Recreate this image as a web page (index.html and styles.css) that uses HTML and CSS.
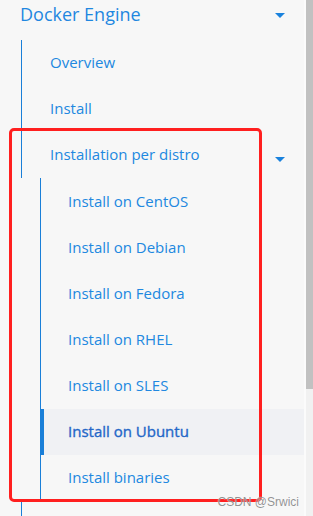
FILE: index.html
```html
<!DOCTYPE html>
<html lang="en">
  <head>
    <meta charset="UTF-8" />
    <title>Docker Engine</title>
    <link rel="stylesheet" href="styles.css">
  </head>
  <body>
    <div class="page">
      <nav class="sidebar">
        <!-- Docker Engine -->
        <div class="group-title">
          <span>Docker Engine</span>
          <i class="caret caret-top"></i>
        </div>
        <ul class="nav">
          <li><a href="#">Overview</a></li>
          <li><a href="#">Install</a></li>
          <li>
            <a href="#" class="has-children">
              <span>Installation per distro</span>
              <i class="caret"></i>
            </a>
            <ul class="nav sub">
              <li><a href="#">Install on CentOS</a></li>
              <li><a href="#">Install on Debian</a></li>
              <li><a href="#">Install on Fedora</a></li>
              <li><a href="#">Install on RHEL</a></li>
              <li><a href="#">Install on SLES</a></li>
              <li><a href="#" class="active">Install on Ubuntu</a></li>
              <li><a href="#">Install binaries</a></li>
            </ul>
          </li>
          <li class="nav-tail"></li>
        </ul>
      </nav>
      <div class="gutter"></div>
      <div class="scrollbar"><div class="thumb"></div></div>
    </div>

    <!-- anotación -->
    <div class="highlight"></div>
    <div class="watermark">CSDN @Srwici</div>
  </body>
</html>
```

FILE: styles.css
```css
body {
  margin: 0;
  width: 313px;
  height: 516px;
  overflow: hidden;
  background-color: #f7f7f7;
  font-family: "Open Sans", "Noto Sans", sans-serif;
  position: relative;
}

.page {
  display: flex;
  height: 516px;
}

.sidebar {
  width: 304px;
  flex-shrink: 0;
}

.gutter {
  width: 2px;
  background-color: #fbfbfb;
}

.scrollbar {
  flex: 1;
  background-color: #f1f1f1;
}

.thumb {
  height: 389px;
  background-color: #c1c1c1;
}

.group-title {
  display: flex;
  justify-content: space-between;
  align-items: flex-start;
  padding: 1px 19px 13px 20px;
  font-size: 18px;
  line-height: 26px;
  color: #1f87e0;
}

.caret {
  width: 0;
  height: 0;
  border-left: 5px solid transparent;
  border-right: 5px solid transparent;
  border-top: 5px solid #1a82dd;
  margin-top: 14px;
}

.caret-top {
  margin-top: 12px;
}

.nav {
  list-style: none;
  margin: 0 0 0 21px;
  padding: 0;
}

.nav a {
  display: flex;
  justify-content: space-between;
  align-items: flex-start;
  padding: 11px 19px 13px 28px;
  border-left: 1px solid #1a7fd8;
  font-size: 15px;
  line-height: 22px;
  color: #2188e0;
  text-decoration: none;
}

.nav-tail {
  height: 20px;
  border-left: 1px solid #1a7fd8;
}

.sub {
  margin-left: 19px;
  padding-top: 1px;
  border-left: 1px solid #1a7fd8;
}

.sub a {
  border-left: none;
  padding-left: 27px;
}

.sub a.active {
  margin-left: -1px;
  border-left: 4px solid #1a7fd8;
  padding-left: 24px;
  background-color: #f0f1f4;
  color: #2467c8;
  -webkit-text-stroke: 0.35px #2467c8;
}

.highlight {
  position: absolute;
  left: 9px;
  top: 128px;
  width: 253px;
  height: 374px;
  box-sizing: border-box;
  border: 3px solid #ff1f1f;
  border-radius: 5px;
}

.watermark {
  position: absolute;
  right: 14px;
  top: 494px;
  font-family: "Liberation Sans", "Noto Sans CJK SC", sans-serif;
  font-size: 12px;
  line-height: 16px;
  color: rgba(110, 110, 110, 0.75);
  text-shadow: 0 0 1px #ffffff;
}
```
